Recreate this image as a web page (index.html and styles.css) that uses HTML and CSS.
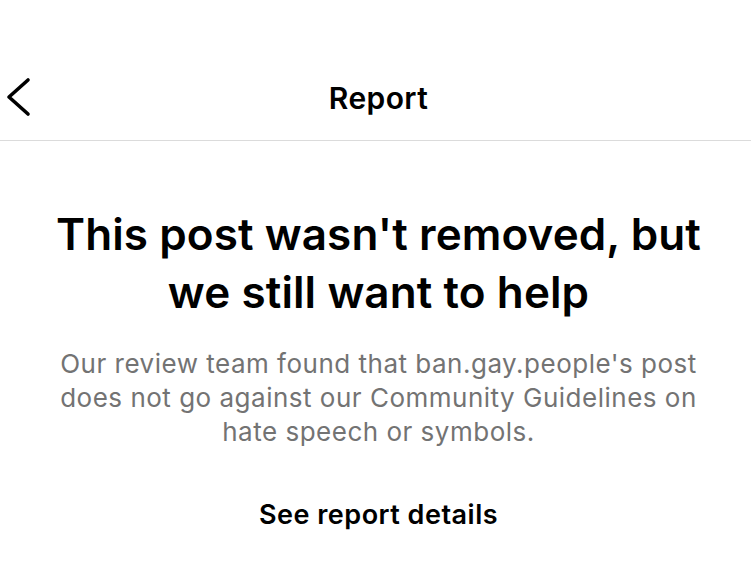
FILE: index.html
```html
<!DOCTYPE html>
<html lang="en">
<head>
    <meta charset="UTF-8">
    <meta name="viewport" content="width=device-width, initial-scale=1.0">
    <title>Report</title>
    <link rel="stylesheet" href="styles.css">
</head>
<body>
    <div class="screen">
        <!-- Top bar -->
        <header class="top-bar">
            <button class="back-button" aria-label="Back">
                <svg width="34" height="46" viewBox="0 0 34 46">
                    <path d="M28 6 L9 23 L28 40" fill="none" stroke="#000" stroke-width="3.6" stroke-linecap="round" stroke-linejoin="round"/>
                </svg>
            </button>
            <h1 class="top-title">Report</h1>
        </header>

        <!-- Result message -->
        <main class="result">
            <h2 class="result-title">This post wasn't removed, but we still want to help</h2>
            <p class="result-text">Our review team found that ban.gay.people's post does not go against our Community Guidelines on hate speech or symbols.</p>
            <a href="#" class="details-link">See report details</a>
        </main>
    </div>
</body>
</html>
```

FILE: styles.css
```css
* {
    box-sizing: border-box;
}
body {
    margin: 0;
    background-color: #fff;
    font-family: Inter, "Noto Sans", sans-serif;
    color: #000;
}
.screen {
    width: 751px;
    min-height: 584px;
}
.top-bar {
    display: flex;
    align-items: center;
    justify-content: center;
    height: 141px;
    padding: 56px 0 0 6px;
    border-bottom: 1px solid #dbdbdb;
    position: relative;
}
.back-button {
    position: absolute;
    left: 0;
    top: 74px;
    padding: 0;
    border: none;
    background: none;
}
.back-button svg {
    display: block;
}
.top-title {
    margin: 0;
    font-size: 30px;
    font-weight: 600;
    letter-spacing: 0.4px;
}
.result {
    display: flex;
    flex-direction: column;
    align-items: center;
    padding: 64px 14px 0 20px;
    text-align: center;
}
.result-title {
    margin: 0;
    font-size: 44px;
    line-height: 58px;
    font-weight: 600;
    letter-spacing: 0.1px;
}
.result-text {
    max-width: 666px;
    margin: 26px 0 0;
    font-size: 26px;
    line-height: 34px;
    color: #737373;
    letter-spacing: 0.5px;
}
.details-link {
    margin-top: 49px;
    font-size: 27px;
    font-weight: 600;
    color: #000;
    text-decoration: none;
    letter-spacing: 0.5px;
}
```
